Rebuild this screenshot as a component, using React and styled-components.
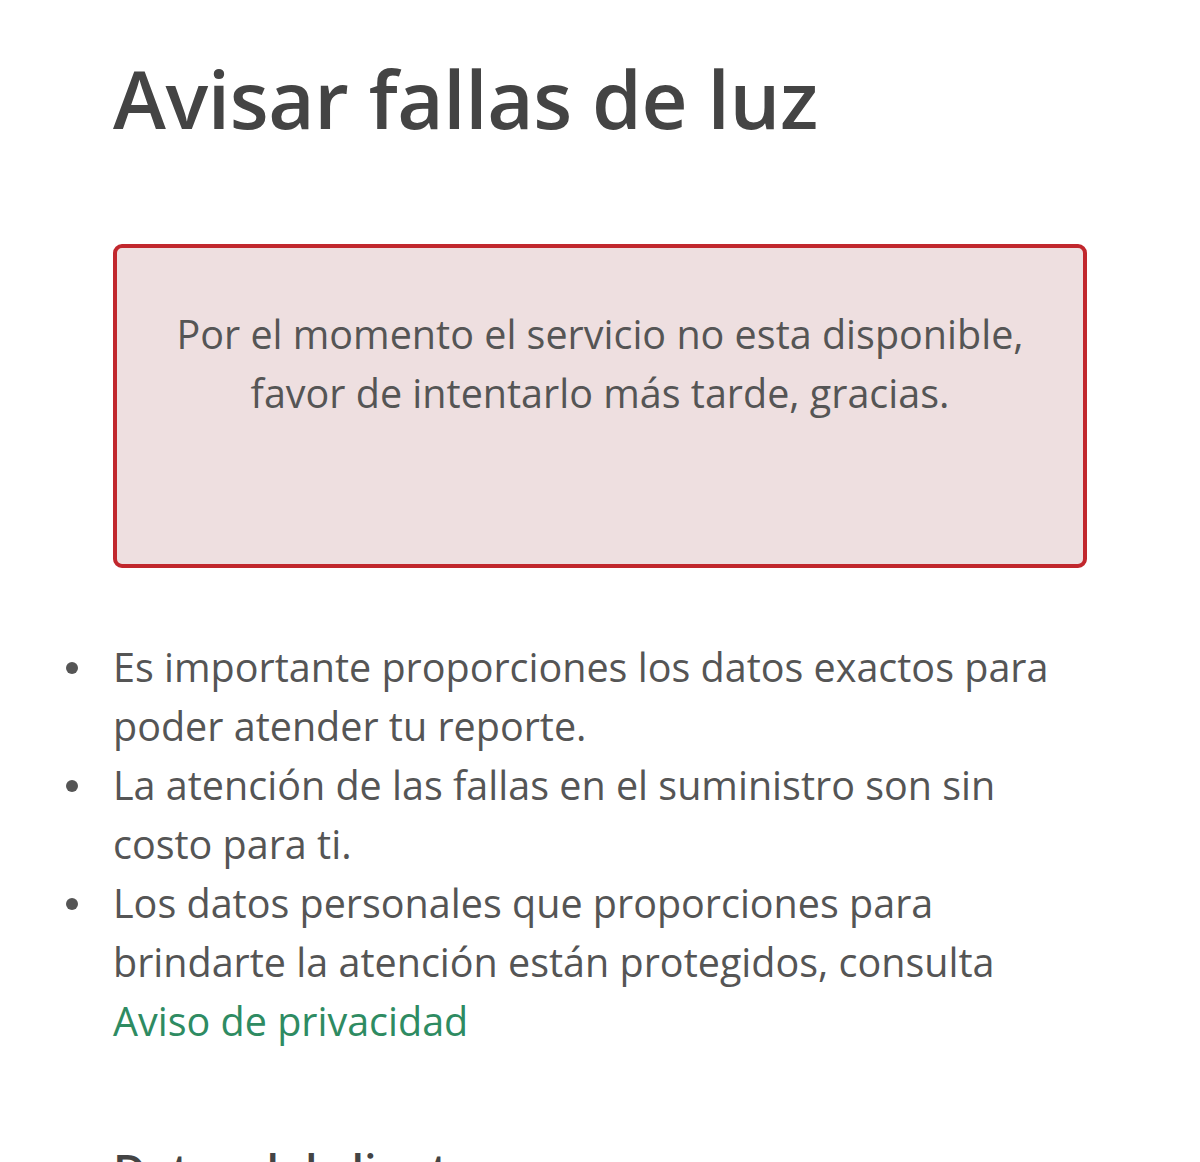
import styled, { createGlobalStyle } from 'styled-components';

const GlobalStyle = createGlobalStyle`
  body {
    margin: 0;
    background: #ffffff;
    font-family: "Open Sans", "Noto Sans", sans-serif;
    color: #4a4a4a;
  }
`;

const notes = [
  'Es importante proporciones los datos exactos para poder atender tu reporte.',
  'La atención de las fallas en el suministro son sin costo para ti.',
];

export default function App() {
  return (
    <>
      <GlobalStyle />
      <Page>
        <Title>Avisar fallas de luz</Title>
        <Alert>
          Por el momento el servicio no esta disponible,
          <br />
          favor de intentarlo más tarde, gracias.
        </Alert>
        <Notes>
          {notes.map((n) => (
            <Note key={n}>{n}</Note>
          ))}
          <Note>
            Los datos personales que proporciones para brindarte la atención están protegidos, consulta{' '}
            <Link href="#">Aviso de privacidad</Link>
          </Note>
        </Notes>
        <SubTitle>Datos del cliente</SubTitle>
      </Page>
    </>
  );
}

const Page = styled.main`
  width: 974px;
  margin-left: 113px;
  padding-top: 50px;
`;

const Title = styled.h1`
  margin: 0;
  font-size: 80px;
  font-weight: 600;
  line-height: 1.2;
  letter-spacing: -0.4px;
  color: #444444;
`;

const Alert = styled.div`
  box-sizing: border-box;
  margin-top: 98px;
  height: 324px;
  padding-top: 57px;
  border: 4px solid #c1272d;
  border-radius: 9px;
  background: #eedfe0;
  text-align: center;
  font-size: 39.5px;
  line-height: 59px;
  color: #555555;
`;

const Notes = styled.ul`
  margin: 70px 0 0;
  padding: 0;
  list-style: none;
`;

const Note = styled.li`
  position: relative;
  font-size: 39.5px;
  line-height: 59px;
  color: #555555;

  &::before {
    content: '';
    position: absolute;
    left: -47px;
    top: 24px;
    width: 12px;
    height: 12px;
    border-radius: 50%;
    background: #555555;
  }
`;

const Link = styled.a`
  color: #2e8b62;
  text-decoration: none;
`;

const SubTitle = styled.h2`
  margin: 92px 0 0;
  font-size: 45px;
  font-weight: 600;
  line-height: 1.2;
  color: #444444;
`;
